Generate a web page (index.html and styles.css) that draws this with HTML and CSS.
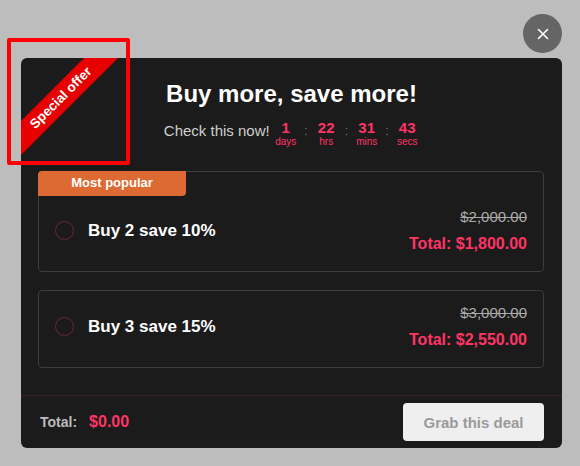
FILE: index.html
```html
<!DOCTYPE html>
<html>
<head>
<meta charset="utf-8">
<link rel="stylesheet" href="styles.css">
</head>
<body>
<div class="wrap">
  <div class="modal">
    <div class="ribbon">Special offer</div>
    <div class="header">
      <h1 class="title">Buy more, save more!</h1>
      <div class="check-row">
        <span class="check">Check this now!</span>
        <div class="countdown">
          <div class="unit"><span class="num">1</span><span class="lbl">days</span></div>
          <span class="colon">:</span>
          <div class="unit"><span class="num">22</span><span class="lbl">hrs</span></div>
          <span class="colon">:</span>
          <div class="unit"><span class="num">31</span><span class="lbl">mins</span></div>
          <span class="colon">:</span>
          <div class="unit"><span class="num">43</span><span class="lbl">secs</span></div>
        </div>
      </div>
    </div>
    <div class="options">
      <div class="card">
        <div class="tab">Most popular</div>
        <div class="card-body">
          <span class="radio"></span>
          <span class="opt-name">Buy 2 save 10%</span>
          <div class="prices">
            <span class="old">$2,000.00</span>
            <span class="total">Total: $1,800.00</span>
          </div>
        </div>
      </div>
      <div class="card">
        <div class="card-body">
          <span class="radio"></span>
          <span class="opt-name">Buy 3 save 15%</span>
          <div class="prices">
            <span class="old">$3,000.00</span>
            <span class="total">Total: $2,550.00</span>
          </div>
        </div>
      </div>
    </div>
    <div class="footer">
      <span class="f-label">Total:</span>
      <span class="f-value">$0.00</span>
      <button class="grab">Grab this deal</button>
    </div>
  </div>
  <button class="close" aria-label="Close">
    <svg width="12" height="12" viewBox="0 0 12 12"><path d="M1.5 1.5 L10.5 10.5 M10.5 1.5 L1.5 10.5" stroke="#fff" stroke-width="1.6" stroke-linecap="round"/></svg>
  </button>
  <div class="highlight"></div>
</div>
</body>
</html>
```

FILE: styles.css
```css
* { box-sizing: border-box; }
html, body { margin: 0; padding: 0; }
body {
  background: #bdbdbd;
  font-family: "Liberation Sans", Arial, sans-serif;
  width: 580px;
  height: 466px;
  overflow: hidden;
}
.wrap {
  position: relative;
  width: 541px;
  margin: 58px 0 0 21px;
}
.modal {
  position: relative;
  background: #1b1b1b;
  border-radius: 6px;
  overflow: hidden;
  height: 390px;
  display: flex;
  flex-direction: column;
}
.ribbon {
  position: absolute;
  left: -60px;
  top: 27.5px;
  width: 200px;
  height: 24px;
  line-height: 24px;
  background: #e60000;
  color: #fff;
  font-weight: bold;
  font-size: 13.5px;
  text-align: center;
  transform: rotate(-45deg);
}
.header {
  padding: 22px 17px 0;
  text-align: center;
}
.title {
  margin: 0 0 12px;
  font-size: 24px;
  line-height: 28px;
  font-weight: bold;
  color: #fff;
}
.check-row {
  display: flex;
  justify-content: center;
  align-items: flex-start;
}
.check {
  font-size: 15px;
  line-height: 18px;
  color: #cfcfcf;
  margin-top: 2px;
  margin-right: 4px;
}
.countdown {
  display: flex;
  align-items: flex-start;
}
.unit {
  width: 24px;
  display: flex;
  flex-direction: column;
  align-items: center;
  color: #ff3466;
}
.num {
  font-size: 15px;
  line-height: 16px;
  font-weight: bold;
}
.lbl {
  font-size: 10px;
  line-height: 11px;
}
.colon {
  width: 16.5px;
  text-align: center;
  font-size: 12px;
  line-height: 16px;
  margin-top: 3px;
  color: #7a7a7a;
}
.options {
  padding: 24px 18px 0 17px;
  display: flex;
  flex-direction: column;
  gap: 18px;
}
.card {
  border: 1px solid #3d3d3d;
  border-radius: 4px;
}
.tab {
  margin: -1px 0 -1px -1px;
  position: relative;
  width: 148px;
  height: 25px;
  background: #dc6a32;
  color: #fff;
  font-weight: bold;
  font-size: 13px;
  line-height: 24px;
  text-align: center;
  border-radius: 4px 0 4px 0;
}
.card-body {
  display: flex;
  align-items: center;
  padding: 12px 16px 17px 16px;
}
.radio {
  width: 19px;
  height: 19px;
  border-radius: 50%;
  border: 1.5px solid #6a2440;
  flex: none;
}
.opt-name {
  margin-left: 14px;
  color: #fff;
  font-weight: bold;
  font-size: 17px;
  flex: 1;
}
.prices {
  display: flex;
  flex-direction: column;
  align-items: flex-end;
  gap: 7px;
}
.old {
  font-size: 15px;
  line-height: 20px;
  color: #ababab;
  text-decoration: line-through;
}
.total {
  font-size: 16px;
  line-height: 20px;
  font-weight: bold;
  color: #ff3466;
}
.footer {
  margin-top: auto;
  border-top: 1px solid #3f2029;
  height: 53px;
  display: flex;
  align-items: center;
  padding: 0 18px 0 19px;
}
.f-label {
  color: #bdbdbd;
  font-weight: bold;
  font-size: 14px;
}
.f-value {
  margin-left: 12px;
  color: #ff3466;
  font-weight: bold;
  font-size: 16px;
}
.grab {
  margin-left: auto;
  width: 141px;
  height: 38px;
  border: none;
  border-radius: 4px;
  background: #efefef;
  color: #9a9a9a;
  font-family: inherit;
  font-weight: bold;
  font-size: 15px;
  padding: 0;
}
.close {
  position: absolute;
  right: 0;
  top: -44px;
  width: 39px;
  height: 39px;
  border-radius: 50%;
  border: none;
  background: #656565;
  display: flex;
  align-items: center;
  justify-content: center;
  padding: 0;
}
.close svg { display: block; }
.highlight {
  position: absolute;
  left: -14px;
  top: -20px;
  width: 123px;
  height: 127px;
  border: 4px solid #ff0000;
  border-radius: 2px;
  pointer-events: none;
}
```
